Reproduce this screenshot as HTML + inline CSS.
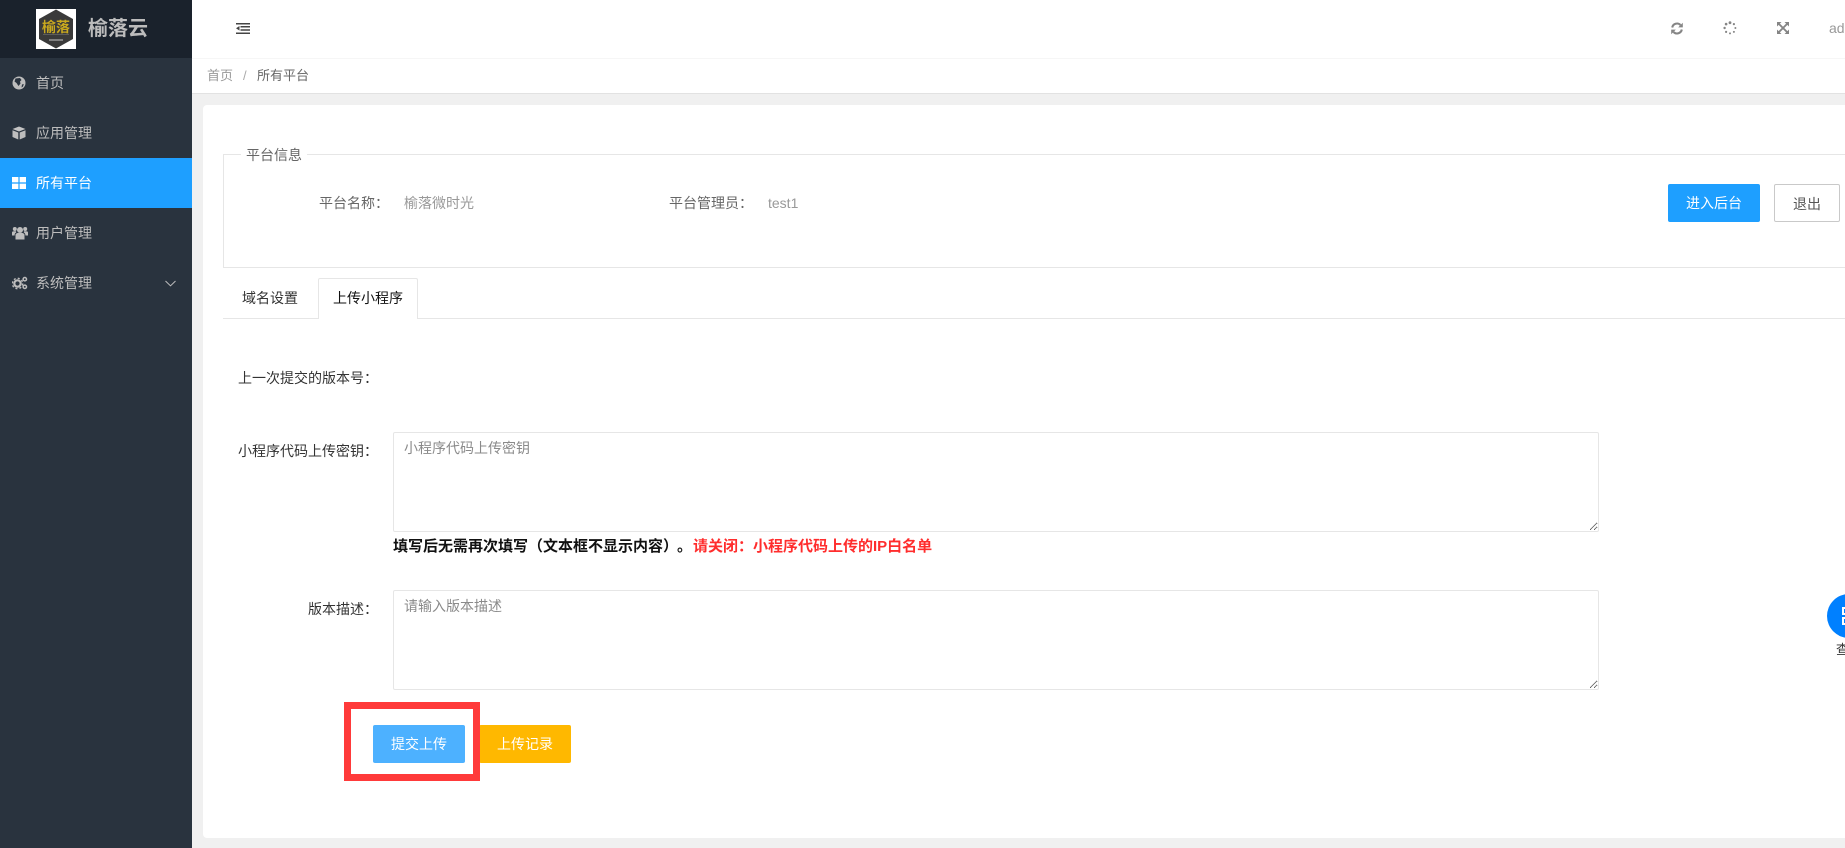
<!DOCTYPE html>
<html lang="zh">
<head>
<meta charset="utf-8">
<title>所有平台</title>
<style>
*{box-sizing:border-box}
html,body{margin:0;padding:0;width:1845px;height:848px;overflow:hidden;background:#f0f0f0;font-family:"Liberation Sans","Noto Sans CJK SC",sans-serif;font-size:14px;color:#333}
.a{position:absolute;white-space:nowrap;line-height:20px}
#side{position:absolute;left:0;top:0;width:192px;height:848px;background:#29333e}
#logo{position:absolute;left:0;top:0;width:192px;height:58px;background:#1a222c}
.item{position:absolute;left:0;width:192px;height:50px;line-height:50px;padding-left:36px;color:#bdbdbd}
.item.on{background:#1e9fff;color:#fff}
.item svg{position:absolute;left:12px;top:18px;width:14px;height:14px}
#head{position:absolute;left:192px;top:0;width:1653px;height:59px;background:#fff;border-bottom:1px solid #f6f6f6}
#crumb{position:absolute;left:192px;top:59px;width:1653px;height:35px;background:#fff;border-bottom:1px solid #e2e2e2;font-size:13px}
#card{position:absolute;left:203px;top:105px;width:1700px;height:733px;background:#fff;border-radius:4px}
#fs{position:absolute;left:223px;top:154px;width:1700px;height:114px;border:1px solid #e6e6e6}
.btn{position:absolute;top:184px;height:38px;line-height:38px;text-align:center;border-radius:2px;color:#fff;background:#1e9fff}
textarea{position:absolute;left:393px;width:1206px;height:100px;border:1px solid #e6e6e6;border-radius:2px;padding:5px 10px;margin:0;font:14px/20px "Liberation Sans","Noto Sans CJK SC",sans-serif;background:#fff;color:#333;outline:none;display:block}
textarea::placeholder{color:#8a8a8a;opacity:1}
</style>
</head>
<body>
<div id="card"></div>
<div id="side">
  <div id="logo">
    <svg style="position:absolute;left:36px;top:9px" width="40" height="40" viewBox="0 0 40 40">
      <rect width="40" height="40" fill="#fff"/>
      <polygon points="20,.5 37,10 37,30 20,39.500 3,30 3,10" fill="#3a3a3a"/>
      <rect x="7" y="25" width="26" height="1" fill="#5c5c5c"/>
      <rect x="13" y="30" width="14" height="2" fill="#808080"/>
    </svg>
    <div class="a" style="left:42px;top:17px;font-size:14px;line-height:20px;font-weight:bold;color:#c9a81e">榆落</div>
    <div class="a" style="left:88px;top:15px;font-size:20px;line-height:28px;font-weight:bold;color:#bcbcbc">榆落云</div>
  </div>
  <div class="item" style="top:58px"><svg viewBox="0 0 14 14"><circle cx="7" cy="7" r="6.500" fill="#bdbdbd"/><path d="M3.500 2.500 8 2 9.500 4 8 5.500 8.500 7.500 6.500 10 4.500 7 2.500 5.500ZM10 8.500 11.800 8 11 10.500 9.500 11.500Z" fill="#29333e"/></svg>首页</div>
  <div class="item" style="top:108px"><svg viewBox="0 0 14 14"><path d="M7 .5 13.500 3 7 5.500 .5 3Z" fill="#c4c4c4"/><path d="M.5 4.200 6.300 6.500V13.500L.5 11ZM13.500 4.200 7.700 6.500V13.500L13.500 11Z" fill="#bdbdbd"/></svg>应用管理</div>
  <div class="item on" style="top:158px"><svg viewBox="0 0 14 14"><path d="M0 1H6.400V6.400H0ZM7.600 1H14V6.400H7.600ZM0 7.600H6.400V13H0ZM7.600 7.600H14V13H7.600Z" fill="#fff"/></svg>所有平台</div>
  <div class="item" style="top:208px"><svg style="width:16px;left:12px" viewBox="0 0 16 14"><circle cx="8" cy="4" r="3" fill="#bdbdbd"/><circle cx="2.800" cy="3" r="2" fill="#bdbdbd"/><circle cx="13.200" cy="3" r="2" fill="#bdbdbd"/><path d="M3.500 13.500V9C3.500 7.500 5 7 6 7H10C11 7 12.500 7.500 12.500 9V13.500Z" fill="#bdbdbd"/><path d="M0 9.500V6.500C0 5.500 1 5.200 2 5.200H4L4.200 6.500C3 7 2.600 8 2.600 9.500ZM16 9.500V6.500C16 5.500 15 5.200 14 5.200H12L11.800 6.500C13 7 13.400 8 13.400 9.500Z" fill="#bdbdbd"/></svg>用户管理</div>
  <div class="item" style="top:258px"><svg style="width:16px" viewBox="0 0 16 14"><circle cx="5.500" cy="7.500" r="3.200" fill="none" stroke="#bdbdbd" stroke-width="2.200"/><circle cx="5.500" cy="7.500" r="5.200" fill="none" stroke="#bdbdbd" stroke-width="1.400" stroke-dasharray="2 2.100"/><circle cx="12.800" cy="3.200" r="1.700" fill="none" stroke="#bdbdbd" stroke-width="1.500"/><circle cx="12.800" cy="10.800" r="1.700" fill="none" stroke="#bdbdbd" stroke-width="1.500"/></svg>系统管理
    <svg style="left:165px;top:22px;width:11px;height:7px" viewBox="0 0 11 7"><path d="M.5 1 5.500 5.800 10.500 1" fill="none" stroke="#bdbdbd" stroke-width="1"/></svg>
  </div>
</div>

<div id="head"></div>
<svg class="a" style="left:236px;top:23px" width="14" height="11" viewBox="0 0 14 11"><path d="M0 0H14V1.500H0ZM4.500 3H14V4.500H4.500ZM4.500 6.200H14V7.700H4.500ZM0 9.500H14V11H0ZM0 5.300 3.500 3V7.600Z" fill="#444"/></svg>
<svg class="a" style="left:1671px;top:22px" width="12" height="13" viewBox="0 0 12 13"><path d="M1.200 5.500A4.900 4.900 0 0 1 9.500 3" fill="none" stroke="#858585" stroke-width="2.100"/><path d="M11.800 .8V5.400H7.200Z" fill="#858585"/><path d="M10.800 7.500A4.900 4.900 0 0 1 2.500 10" fill="none" stroke="#858585" stroke-width="2.100"/><path d="M.2 12.200V7.600H4.800Z" fill="#858585"/></svg>
<svg class="a" style="left:1723px;top:21px" width="14" height="14" viewBox="0 0 14 14" fill="#858585"><circle cx="7" cy="1.700" r="1.400"/><circle cx="10.900" cy="3.100" r="1.100"/><circle cx="12.400" cy="7" r="1"/><circle cx="10.900" cy="10.900" r="1"/><circle cx="7" cy="12.400" r="1"/><circle cx="3.100" cy="10.900" r="1.100"/><circle cx="1.600" cy="7" r="1.200"/><circle cx="3.100" cy="3.100" r="1.300"/></svg>
<svg class="a" style="left:1777px;top:22px" width="12" height="12" viewBox="0 0 12 12"><path d="M0 0H4.500L0 4.500ZM12 0V4.500L7.500 0ZM0 12V7.500L4.500 12ZM12 12H7.500L12 7.500Z" fill="#858585"/><path d="M2 2 10 10M10 2 2 10" stroke="#858585" stroke-width="1.900" fill="none"/></svg>
<div class="a" style="left:1829px;top:18px;color:#999">admin</div>

<div id="crumb"></div>
<div class="a" style="left:207px;top:66px;font-size:13px;color:#999">首页</div>
<div class="a" style="left:243px;top:66px;font-size:13px;color:#aaa">/</div>
<div class="a" style="left:257px;top:66px;font-size:13px;color:#666">所有平台</div>

<div id="fs"></div>
<div class="a" style="left:241px;top:145px;padding:0 5px;background:#fff;color:#666">平台信息</div>
<div class="a" style="left:319px;top:193px;color:#666">平台名称：</div>
<div class="a" style="left:404px;top:193px;color:#999">榆落微时光</div>
<div class="a" style="left:669px;top:193px;color:#666">平台管理员：</div>
<div class="a" style="left:768px;top:193px;color:#999">test1</div>
<div class="btn" style="left:1668px;width:92px">进入后台</div>
<div class="btn" style="left:1774px;width:66px;background:#fff;color:#555;border:1px solid #c9c9c9">退出</div>

<div style="position:absolute;left:223px;top:318px;width:1622px;height:1px;background:#e6e6e6"></div>
<div class="a" style="left:242px;top:288px;color:#333">域名设置</div>
<div style="position:absolute;left:318px;top:278px;width:100px;height:41px;background:#fff;border:1px solid #e6e6e6;border-bottom:none;border-radius:2px 2px 0 0"></div>
<div class="a" style="left:333px;top:288px;color:#111">上传小程序</div>

<div class="a" style="left:238px;top:368px;color:#333">上一次提交的版本号：</div>
<div class="a" style="left:238px;top:441px;color:#333">小程序代码上传密钥：</div>
<textarea style="top:432px" placeholder="小程序代码上传密钥"></textarea>
<div class="a" style="left:393px;top:537px;font-size:15px;font-weight:bold;color:#111">填写后无需再次填写（文本框不显示内容）</div>
<div class="a" style="left:677px;top:537px;font-size:15px;font-weight:bold;color:#111">。</div>
<div class="a" style="left:693px;top:537px;font-size:15px;font-weight:bold;color:#ff2d2d">请关闭：小程序代码上传的IP白名单</div>
<div class="a" style="left:308px;top:599px;color:#333">版本描述：</div>
<textarea style="top:590px" placeholder="请输入版本描述"></textarea>

<div class="a" style="left:373px;top:725px;width:92px;height:38px;line-height:38px;text-align:center;background:#4db1ff;color:#fff;border-radius:2px">提交上传</div>
<div class="a" style="left:479px;top:725px;width:92px;height:38px;line-height:38px;text-align:center;background:#ffb800;color:#fff;border-radius:2px">上传记录</div>
<div style="position:absolute;left:344px;top:702px;width:136px;height:79px;border:7px solid #ff3a3a"></div>

<div style="position:absolute;left:1827px;top:594px;width:44px;height:44px;border-radius:50%;background:#0080ff"></div>
<svg class="a" style="left:1842px;top:607px" width="8" height="18" viewBox="0 0 8 18" fill="#fff"><path d="M0 0H8V8H0ZM2 2V6H8V2ZM0 10H8V18H0ZM2 12V16H8V12Z"/></svg>
<div class="a" style="left:1836px;top:640px;color:#333;font-size:13px">查看</div>
</body>
</html>
